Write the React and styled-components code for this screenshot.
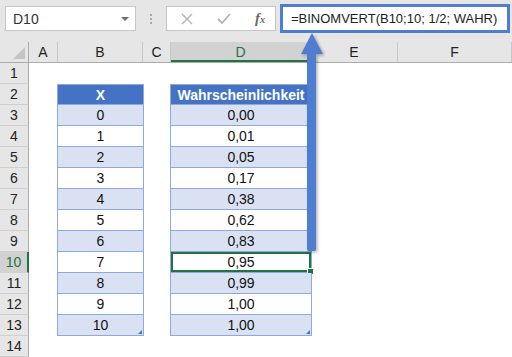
import React from "react"
import styled, { createGlobalStyle } from "styled-components"

const GlobalStyle = createGlobalStyle`
  body {
    margin: 0;
    background: #ffffff;
    font-family: "Liberation Sans", Arial, sans-serif;
  }
`;

const COLS = "29px 29px 85px 28px 140px 87px 1fr";

const values = ["0,00", "0,01", "0,05", "0,17", "0,38", "0,62", "0,83", "0,95", "0,99", "1,00", "1,00"];

export default function App() {
    const rows = [];
    for (let r = 1; r <= 14; r++) {
        rows.push(r);
    }
    function tableCell(r, col) {
        if (r < 2 || r > 13) return <Cell />;
        if (r === 2) {
            return <TableCell header>{col === "B" ? "X" : "Wahrscheinlichkeit"}</TableCell>;
        }
        const i = r - 3;
        return (
            <TableCell striped={r % 2 === 1} selected={col === "D" && r === 10}>
                {col === "B" ? i : values[i]}
                {col === "D" && r === 10 && <FillHandle />}
                {r === 13 && <ResizeMark />}
            </TableCell>
        );
    }
    return (
        <>
            <GlobalStyle />
            <Page>
                <FormulaBar>
                    <NameBox>
                        <span>D10</span>
                        <Caret />
                    </NameBox>
                    <Grip>
                        <i /><i /><i />
                    </Grip>
                    <FxBox>
                        <FxIcon>
                            <svg width="12" height="12" viewBox="0 0 12 12">
                                <path d="M1 1 L11 11 M11 1 L1 11" stroke="#b4b4b4" strokeWidth="1.4" fill="none" />
                            </svg>
                        </FxIcon>
                        <FxIcon>
                            <svg width="14" height="12" viewBox="0 0 14 12">
                                <path d="M1 6 L5 10 L13 1" stroke="#b4b4b4" strokeWidth="1.8" fill="none" />
                            </svg>
                        </FxIcon>
                        <FxLabel>f<small>x</small></FxLabel>
                    </FxBox>
                    <FormulaInput>=BINOMVERT(B10;10; 1/2; WAHR)</FormulaInput>
                </FormulaBar>
                <HeaderRow>
                    <Corner />
                    <ColHead>A</ColHead>
                    <ColHead>B</ColHead>
                    <ColHead>C</ColHead>
                    <ColHead active>D</ColHead>
                    <ColHead>E</ColHead>
                    <ColHead>F</ColHead>
                </HeaderRow>
                {rows.map((r) => (
                    <SheetRow key={r}>
                        <RowHead active={r === 10}>{r}</RowHead>
                        <Cell />
                        {tableCell(r, "B")}
                        <Cell />
                        {tableCell(r, "D")}
                        <Cell />
                        <Cell />
                    </SheetRow>
                ))}
                <Arrow width="44" height="230" viewBox="0 0 44 230">
                    <defs>
                        <filter id="sh" x="-50%" y="-10%" width="200%" height="120%">
                            <feDropShadow dx="1.5" dy="1.5" stdDeviation="1.5" floodColor="#000" floodOpacity="0.3" />
                        </filter>
                    </defs>
                    <g filter="url(#sh)">
                        <polygon points="22,3 11,24 33,24" fill="#4f7dd0" />
                        <rect x="17" y="22" width="9" height="199" rx="2" fill="#4f7dd0" />
                    </g>
                </Arrow>
            </Page>
        </>
    );
}

const Page = styled.div`
  position: relative;
  width: 512px;
  height: 357px;
  overflow: hidden;
  background: #ffffff;
`;

const FormulaBar = styled.div`
  height: 42px;
  box-sizing: border-box;
  background: #e6e6e6;
  display: flex;
  align-items: flex-start;
  padding: 4px 0 0 5px;
`;

const NameBox = styled.div`
  width: 131px;
  height: 25px;
  margin-top: 2px;
  box-sizing: border-box;
  background: #ffffff;
  border: 1px solid #c6c6c6;
  display: flex;
  align-items: center;
  justify-content: space-between;
  padding: 0 6px 0 7px;
  font-size: 14px;
  color: #333333;
`;

const Caret = styled.span`
  width: 0;
  height: 0;
  border-left: 4px solid transparent;
  border-right: 4px solid transparent;
  border-top: 4px solid #707070;
`;

const Grip = styled.div`
  width: 30px;
  height: 29px;
  display: flex;
  flex-direction: column;
  align-items: center;
  justify-content: center;
  gap: 2px;
  i {
    width: 2px;
    height: 2px;
    background: #a8a8a8;
  }
`;

const FxBox = styled.div`
  width: 110px;
  height: 25px;
  margin-top: 2px;
  box-sizing: border-box;
  background: #ffffff;
  border: 1px solid #c6c6c6;
  display: flex;
  align-items: center;
  justify-content: space-between;
  padding: 0 10px 0 14px;
`;

const FxIcon = styled.span`
  display: flex;
  align-items: center;
`;

const FxLabel = styled.span`
  font-family: "Liberation Serif", serif;
  font-style: italic;
  font-weight: bold;
  font-size: 15px;
  color: #6a6a6a;
  small {
    font-size: 10px;
  }
`;

const FormulaInput = styled.div`
  width: 230px;
  height: 29px;
  margin-left: 4px;
  box-sizing: border-box;
  background: #ffffff;
  border: 3px solid #4f7dd0;
  display: flex;
  align-items: center;
  padding-left: 8px;
  font-size: 13px;
  color: #222222;
  white-space: nowrap;
`;

const HeaderRow = styled.div`
  display: grid;
  grid-template-columns: ${COLS};
  height: 20px;
  background: #e6e6e6;
  border-bottom: 1px solid #ababab;
  box-sizing: content-box;
`;

const Corner = styled.div`
  position: relative;
  border-right: 1px solid #ababab;
  &::after {
    content: "";
    position: absolute;
    right: 3px;
    bottom: 3px;
    width: 0;
    height: 0;
    border-left: 12px solid transparent;
    border-bottom: 12px solid #c4c4c4;
  }
`;

const ColHead = styled.div`
  display: flex;
  align-items: center;
  justify-content: center;
  font-size: 14px;
  color: ${(p) => (p.active ? "#217346" : "#222222")};
  background: ${(p) => (p.active ? "#d2d2d2" : "transparent")};
  border-right: 1px solid #c8c8c8;
  box-shadow: ${(p) => (p.active ? "inset 0 -2px 0 #217346" : "none")};
`;

const SheetRow = styled.div`
  display: grid;
  grid-template-columns: ${COLS};
  height: 21px;
`;

const RowHead = styled.div`
  display: flex;
  align-items: center;
  justify-content: center;
  font-size: 14px;
  color: ${(p) => (p.active ? "#217346" : "#222222")};
  background: ${(p) => (p.active ? "#d2d2d2" : "#e6e6e6")};
  border-bottom: 1px solid #d0d0d0;
  border-right: ${(p) => (p.active ? "2px solid #217346" : "1px solid #ababab")};
  box-sizing: border-box;
`;

const Cell = styled.div`
  background: #ffffff;
`;

const TableCell = styled.div`
  position: relative;
  display: flex;
  align-items: center;
  justify-content: center;
  box-sizing: border-box;
  font-size: 14px;
  font-weight: ${(p) => (p.header ? "bold" : "normal")};
  color: ${(p) => (p.header ? "#ffffff" : "#111111")};
  background: ${(p) => (p.header ? "#4472c4" : p.striped ? "#d9e1f2" : "#ffffff")};
  border: 1px solid #8eaadb;
  border-top: ${(p) => (p.header ? "1px solid #8eaadb" : "none")};
  margin-left: -1px;
  margin-right: -1px;
  box-shadow: ${(p) => (p.selected ? "inset 0 0 0 2px #217346" : "none")};
`;

const FillHandle = styled.span`
  position: absolute;
  right: -3px;
  bottom: -3px;
  width: 5px;
  height: 5px;
  background: #217346;
  border: 1px solid #ffffff;
`;

const ResizeMark = styled.span`
  position: absolute;
  right: 1px;
  bottom: 1px;
  width: 0;
  height: 0;
  border-left: 4px solid transparent;
  border-bottom: 4px solid #4472c4;
`;

const Arrow = styled.svg`
  position: absolute;
  left: 290px;
  top: 30px;
  overflow: visible;
`;
